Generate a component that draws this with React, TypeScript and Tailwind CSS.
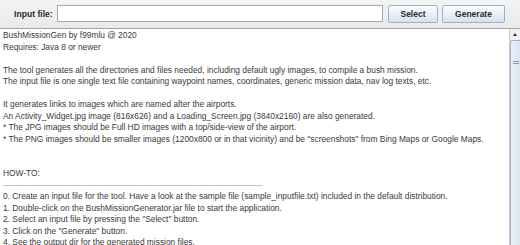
import React, { useState } from "react";

const lines: string[] = [
  "BushMissionGen by f99mlu @ 2020",
  "Requires: Java 8 or newer",
  "",
  "The tool generates all the directories and files needed, including default ugly images, to compile a bush mission.",
  "The input file is one single text file containing waypoint names, coordinates, generic mission data, nav log texts, etc.",
  "",
  "It generates links to images which are named after the airports.",
  "An Activity_Widget.jpg image (816x626) and a Loading_Screen.jpg (3840x2160) are also generated.",
  "* The JPG images should be Full HD images with a top/side-view of the airport.",
  '* The PNG images should be smaller images (1200x800 or in that vicinity) and be "screenshots" from Bing Maps or Google Maps.',
  "",
  "",
  "HOW-TO:",
  "-".repeat(93),
  "0. Create an input file for the tool. Have a look at the sample file (sample_inputfile.txt) included in the default distribution.",
  "1. Double-click on the BushMissionGenerator.jar file to start the application.",
  '2. Select an input file by pressing the "Select" button.',
  '3. Click on the "Generate" button.',
  "4. See the output dir for the generated mission files.",
];

const Button: React.FC<{ label: string; width: string }> = ({ label, width }) => (
  <button
    className={`${width} h-[18px] flex items-center justify-center rounded-[2px] border border-[#9eb0c6] bg-gradient-to-b from-[#fbfcfe] to-[#d6e2f0] text-[8.5px] font-bold text-[#2a2a2a]`}
  >
    {label}
  </button>
);

const App: React.FC = () => {
  const [inputFile, setInputFile] = useState("");

  return (
    <div className="w-[520px] h-[245px] overflow-hidden bg-white font-['Liberation_Sans',Arial,sans-serif] flex flex-col">
      {/* toolbar */}
      <div className="h-[28px] shrink-0 flex items-center pl-[14px] bg-gradient-to-b from-[#f4f4f4] to-[#e9e9e9]">
        <span className="w-[43px] text-[8.6px] font-bold text-[#2b2b2b]">Input file:</span>
        <input
          type="text"
          value={inputFile}
          onChange={(e) => setInputFile(e.target.value)}
          className="w-[326px] h-[17px] mt-[-1px] border border-[#a9a9a9] bg-white px-1 text-[8.4px] focus:outline-none"
        />
        <div className="flex gap-[4px] ml-[5px]">
          <Button label="Select" width="w-[50px]" />
          <Button label="Generate" width="w-[63px]" />
        </div>
      </div>

      {/* text area + scrollbar */}
      <div className="flex-1 flex border-t border-[#a5a5a5] min-h-0">
        <div className="flex-1 pl-[3px] pt-[1px] text-[8.4px] leading-[11.5px] text-[#3a3a3a] whitespace-pre overflow-hidden">
          {lines.map((line, i) => (
            <div key={i} className={line.startsWith("---") ? "text-[#9a9a9a]" : ""}>
              {line === "" ? "\u00a0" : line}
            </div>
          ))}
        </div>
        <div className="w-[11px] shrink-0 flex flex-col border-l border-[#cfcfcf] bg-[#eef0f2]">
          <div className="h-[11px] flex items-center justify-center">
            <div className="w-0 h-0 border-l-[2.5px] border-r-[2.5px] border-b-[3px] border-l-transparent border-r-transparent border-b-[#333]" />
          </div>
          <div className="flex-1 border-l border-t border-[#a3b4ca] rounded-tl-[2px] bg-gradient-to-r from-[#eaf0f7] to-[#dbe4ef] flex flex-col items-center pt-[20px]">
            <div className="w-[6px] flex flex-col gap-[1px]">
              <div className="h-px bg-[#8799ad]" />
              <div className="h-px bg-[#8799ad]" />
            </div>
          </div>
        </div>
      </div>
    </div>
  );
};

export default App;
